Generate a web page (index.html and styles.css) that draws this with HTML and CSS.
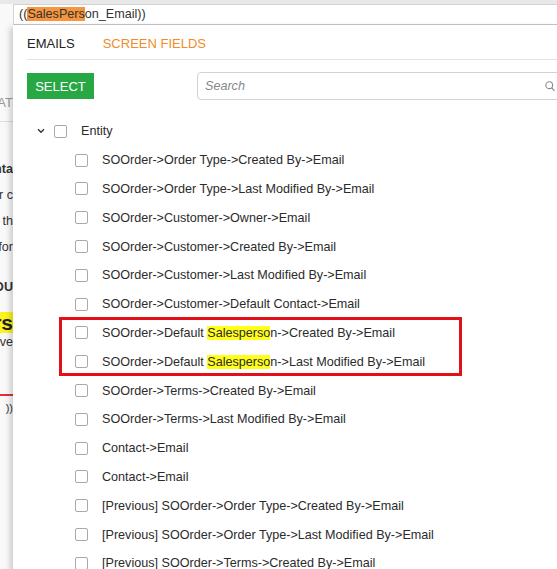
FILE: index.html
```html
<!DOCTYPE html>
<html>
<head>
<meta charset="utf-8">
<link rel="stylesheet" href="styles.css">
</head>
<body>
<div class="topband"></div>
<div class="main">
  <div class="behind">
    <div class="bl bl-at"><span>AT</span></div>
    <div class="bl-sep"></div>
    <div class="bl bl-b1"><span class="bold">Conta</span></div>
    <div class="bl bl-n"><span>for c</span></div>
    <div class="bl bl-n"><span>and th</span></div>
    <div class="bl bl-n"><span>ed for</span></div>
    <div class="bl bl-b2"><span class="bold">YOU</span></div>
    <div class="bl bl-big"><span class="big">Users</span></div>
    <div class="bl bl-small"><span>Active</span></div>
    <div class="bl-red"></div>
    <div class="bl bl-par"><span>))</span></div>
  </div>
  <div class="right">
    <div class="field">((<span class="hl-o">SalesPers</span>on_Email))</div>
    <div class="popup">
      <div class="tabs">
        <span class="tab active">EMAILS</span>
        <span class="tab orange">SCREEN FIELDS</span>
      </div>
      <div class="toolbar">
        <button class="btn">SELECT</button>
        <div class="search">
          <span class="ph">Search</span>
          <svg class="mag" width="10" height="11" viewBox="0 0 10 11"><circle cx="4.2" cy="4.2" r="3.4" fill="none" stroke="#8a8a8a" stroke-width="1.1"/><path d="M6.7 6.9 L9.4 9.8" stroke="#8a8a8a" stroke-width="1.2"/></svg>
        </div>
      </div>
      <div class="tree">
        <div class="row root">
          <svg class="chev" width="8" height="6" viewBox="0 0 8 6"><path d="M1 1.2 L4 4.2 L7 1.2" fill="none" stroke="#333" stroke-width="1.4"/></svg>
          <span class="cb"></span><span class="lbl">Entity</span>
        </div>
        <div class="row child"><span class="cb"></span><span class="lbl">SOOrder-&gt;Order Type-&gt;Created By-&gt;Email</span></div>
        <div class="row child"><span class="cb"></span><span class="lbl">SOOrder-&gt;Order Type-&gt;Last Modified By-&gt;Email</span></div>
        <div class="row child"><span class="cb"></span><span class="lbl">SOOrder-&gt;Customer-&gt;Owner-&gt;Email</span></div>
        <div class="row child"><span class="cb"></span><span class="lbl">SOOrder-&gt;Customer-&gt;Created By-&gt;Email</span></div>
        <div class="row child"><span class="cb"></span><span class="lbl">SOOrder-&gt;Customer-&gt;Last Modified By-&gt;Email</span></div>
        <div class="row child"><span class="cb"></span><span class="lbl">SOOrder-&gt;Customer-&gt;Default Contact-&gt;Email</span></div>
        <div class="row child"><span class="cb"></span><span class="lbl">SOOrder-&gt;Default <span class="hl-y">Salesperso</span>n-&gt;Created By-&gt;Email</span></div>
        <div class="row child"><span class="cb"></span><span class="lbl">SOOrder-&gt;Default <span class="hl-y">Salesperso</span>n-&gt;Last Modified By-&gt;Email</span></div>
        <div class="row child"><span class="cb"></span><span class="lbl">SOOrder-&gt;Terms-&gt;Created By-&gt;Email</span></div>
        <div class="row child"><span class="cb"></span><span class="lbl">SOOrder-&gt;Terms-&gt;Last Modified By-&gt;Email</span></div>
        <div class="row child"><span class="cb"></span><span class="lbl">Contact-&gt;Email</span></div>
        <div class="row child"><span class="cb"></span><span class="lbl">Contact-&gt;Email</span></div>
        <div class="row child"><span class="cb"></span><span class="lbl">[Previous] SOOrder-&gt;Order Type-&gt;Created By-&gt;Email</span></div>
        <div class="row child"><span class="cb"></span><span class="lbl">[Previous] SOOrder-&gt;Order Type-&gt;Last Modified By-&gt;Email</span></div>
        <div class="row child"><span class="cb"></span><span class="lbl">[Previous] SOOrder-&gt;Terms-&gt;Created By-&gt;Email</span></div>
      </div>
      <div class="redbox"></div>
    </div>
  </div>
</div>
</body>
</html>
```
FILE: styles.css
```css
html, body {
  margin: 0;
  padding: 0;
  width: 557px;
  height: 569px;
  overflow: hidden;
  background: #ffffff;
  font-family: "Liberation Sans", Arial, sans-serif;
  color: #333333;
}
.topband {
  height: 4px;
  background: #e8e8e8;
}
.main {
  display: flex;
  height: 565px;
}
.behind {
  width: 13px;
  flex: 0 0 13px;
  overflow: hidden;
  background: #f9f9f9;
  display: flex;
  flex-direction: column;
  font-size: 12.6px;
  color: #333;
}
.bl {
  display: flex;
  justify-content: flex-end;
  white-space: nowrap;
  line-height: 14px;
}
.bl span { flex: 0 0 auto; }
.bl-at { margin-top: 92px; color: #999; font-size: 13px; }
.bl-sep { height: 1px; background: #dddddd; margin-top: 11px; flex: 0 0 1px; }
.bl-b1 { margin-top: 40px; }
.bl-n { margin-top: 12px; }
.bl-b2 { margin-top: 26px; }
.bold { font-weight: bold; }
.bl-big { margin-top: 18px; line-height: 21px; }
.big { font-size: 21px; font-weight: bold; background: #fcf51c; color: #222; }
.bl-small { margin-top: 2px; }
.bl-red { height: 2px; background: #e53030; margin-top: 45px; flex: 0 0 2px; }
.bl-par { margin-top: 5px; font-size: 11px; }

.right {
  flex: 1 1 auto;
  display: flex;
  flex-direction: column;
  min-width: 0;
}
.field {
  height: 19px;
  border-top: 1px solid #d4d4d4;
  border-bottom: 1px solid #c4c4c4;
  border-left: 1px solid #d4d4d4;
  font-size: 12.6px;
  line-height: 19px;
  padding-left: 5px;
  white-space: nowrap;
  color: #333;
  background: #fff;
}
.hl-o { background: #f6953d; }
.popup {
  position: relative;
  flex: 1 1 auto;
  background: #fff;
  box-shadow: -3px 2px 6px rgba(0,0,0,0.18);
  padding-left: 14px;
  display: flex;
  flex-direction: column;
}
.tabs {
  display: flex;
  align-items: center;
  height: 35px;
  box-sizing: border-box;
  padding-top: 3px;
  border-bottom: 1px solid #e2e2e2;
  font-size: 13px;
  gap: 28px;
}
.tab { color: #222; }
.tab.orange { color: #f28c28; }
.toolbar {
  display: flex;
  align-items: flex-start;
  margin-top: 13px;
}
.btn {
  width: 67px;
  flex: 0 0 67px;
  height: 26px;
  background: #28a745;
  color: #fff;
  border: none;
  font-family: "Liberation Sans", Arial, sans-serif;
  font-size: 13px;
  padding: 0;
  margin-top: 0;
  border-radius: 0;
}
.search {
  margin-left: 103px;
  width: 372px;
  flex: 0 0 372px;
  height: 28px;
  border: 1px solid #d2d2d2;
  border-radius: 4px;
  box-sizing: border-box;
  display: flex;
  align-items: center;
  margin-top: -1px;
  padding-left: 7px;
}
.ph {
  font-style: italic;
  color: #888;
  font-size: 12.6px;
  flex: 1 1 auto;
}
.mag { margin-right: 13px; }
.tree {
  margin-top: 17px;
  display: flex;
  flex-direction: column;
}
.row {
  height: 28.8px;
  display: flex;
  align-items: center;
  font-size: 12.6px;
  white-space: nowrap;
  flex: 0 0 28.8px;
}
.root { padding-left: 10px; }
.chev { margin-right: 9px; }
.child { padding-left: 48px; }
.cb {
  width: 13px;
  height: 13px;
  box-sizing: border-box;
  border: 1px solid #a9a9a9;
  border-radius: 2px;
  background: #fff;
  margin-right: 14px;
  flex: 0 0 13px;
}
.lbl { color: #2b2b2b; }
.hl-y { background: #ffff1a; }
.redbox {
  position: absolute;
  left: 46px;
  top: 292px;
  width: 403px;
  height: 59px;
  border: 3px solid #e3101a;
  box-sizing: border-box;
}
```
